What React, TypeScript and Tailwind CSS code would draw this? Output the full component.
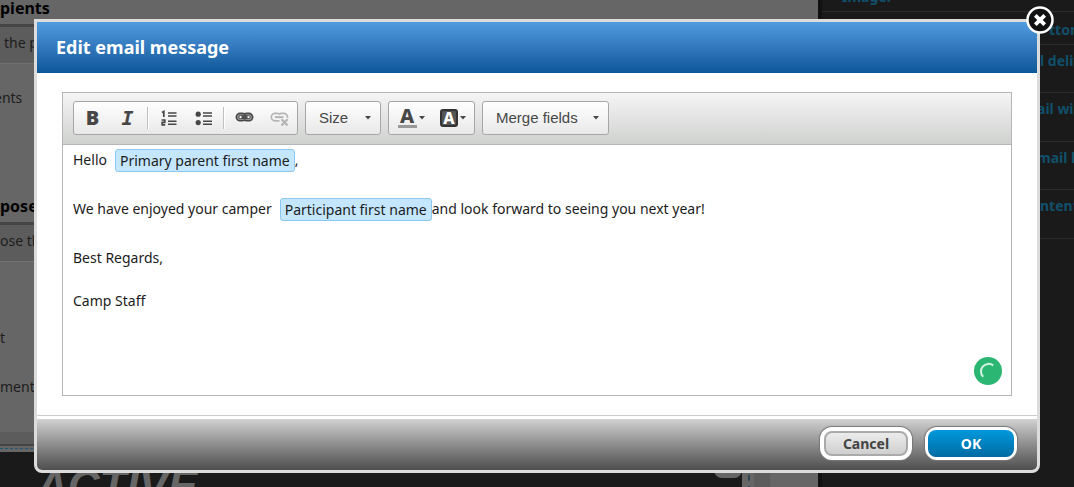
import { useState } from "react";
import type { ReactNode } from "react";
import { clsx } from "clsx";

const sidebarLinks = [
  { label: "tton", className: "h-[33px] pl-[227px] pt-2" },
  { label: "l deliv", className: "h-12 pl-[218px] pt-1.5" },
  { label: "ail wi", className: "h-[49px] pl-[215px] pt-1.5" },
  { label: "mail l", className: "h-12 pl-[215px] pt-1.5" },
  { label: "ntent", className: "h-[49px] pl-[218px] pt-1.5" },
];

export default function App() {
  const [open, setOpen] = useState(true);

  return (
    <div className="relative h-screen overflow-hidden bg-[#1a1a1a] font-['Noto_Sans',sans-serif] text-sm text-[#1c1c1c]">
      <BackgroundPage />
      {open && <EditMessageDialog onClose={() => setOpen(false)} />}
    </div>
  );
}

function BackgroundPage() {
  return (
    <div className="flex h-full whitespace-nowrap" aria-hidden="true">
      <div className="min-w-0 flex-1">
        <div className="bg-[#666]">
          <SectionTitle className="h-6 pb-1.5">pients</SectionTitle>
          <SectionHint className="pl-1">the people</SectionHint>
          <div className="h-[158px] pt-6 leading-5">
            <p className="-ml-1.5">ents</p>
            <SectionTitle className="h-[114px] pb-1.5">pose</SectionTitle>
          </div>
          <SectionHint>ose the</SectionHint>
          <div className="h-[170px] pt-[66px] leading-5">
            <p>t</p>
            <p className="mt-[29px]">ments</p>
          </div>
          <div className="h-3.5 border-b-2 border-[#444] bg-[#5c5c5c]" />
          <div className="h-1.5 pt-0.5">
            <div className="border-t border-dashed border-[#1d5878]" />
          </div>
        </div>
        <div className="flex h-10 bg-[#1a1a1a]">
          <div className="flex min-w-0 flex-1 justify-between overflow-hidden pl-9">
            <span className="pt-3.5 font-['Liberation_Sans',sans-serif] text-[44px] leading-10 font-bold text-[#666] italic">
              ACTIVE
            </span>
            <div className="h-[26px] w-7 rounded-b-lg bg-[#666]" />
          </div>
          <div className="flex w-[76px] bg-[#666]">
            <div className="ml-1.5 border-l-2 border-dashed border-[#2c4552]" />
            <div className="ml-1 w-4 bg-[#5c5c5c]" />
          </div>
        </div>
      </div>
      <nav className="w-64 shrink-0 overflow-hidden border-l-4 border-[#111] font-bold text-[#11506a]">
        <div className="flex h-3 items-end border-b border-[#2c2c2c] pb-1 pl-5 leading-5">
          <a href="#image">Image:</a>
        </div>
        {sidebarLinks.map((link) => (
          <div
            key={link.label}
            className={clsx("border-b border-[#2c2c2c] leading-5", link.className)}
          >
            <a href="#content">{link.label}</a>
          </div>
        ))}
      </nav>
    </div>
  );
}

function SectionTitle(props: { className?: string; children: ReactNode }) {
  return (
    <h2
      className={clsx(
        "flex items-end text-base leading-5 font-bold text-black",
        props.className,
      )}
    >
      {props.children}
    </h2>
  );
}

function SectionHint(props: { className?: string; children: ReactNode }) {
  return (
    <p
      className={clsx(
        "h-10 border-t-3 border-b border-t-[#444] border-b-[#707070] bg-[#5c5c5c] pt-1.5 leading-5",
        props.className,
      )}
    >
      {props.children}
    </p>
  );
}

function EditMessageDialog({ onClose }: { onClose: () => void }) {
  return (
    <div className="absolute inset-x-0 top-0 px-[34px] pt-[19px]">
      <div
        role="dialog"
        aria-labelledby="dialog-title"
        className="relative rounded-b-lg border-3 border-[#dcdcdc] bg-white"
      >
        <header className="h-[51px] bg-linear-to-b from-[#519bdf] to-[#0b5799] px-[19px]">
          <h1
            id="dialog-title"
            className="text-lg leading-[51px] font-bold text-white"
          >
            Edit email message
          </h1>
        </header>
        <div className="border-b border-[#ccc] px-[25px] py-[19px]">
          <Editor />
        </div>
        <footer className="mt-[3px] flex h-[51px] items-start justify-end gap-[13px] rounded-b-[5px] bg-linear-to-b from-[#d2d2d2] to-[#4f4f4f] px-5 pt-2">
          <button
            type="button"
            onClick={onClose}
            className="h-[33px] w-[92px] rounded-xl border-4 border-white bg-white shadow-[0_0_1px_1px_#777]"
          >
            <span className="block h-full rounded-lg border-2 border-[#aaa] bg-linear-to-b from-[#ececec] to-[#cfcfcf] text-sm leading-[21px] font-bold text-[#444]">
              Cancel
            </span>
          </button>
          <button
            type="button"
            onClick={onClose}
            className="h-[33px] w-[92px] rounded-xl border-3 border-white bg-white shadow-[0_0_1px_1px_#777]"
          >
            <span className="block h-full rounded-lg bg-linear-to-b from-[#0099dc] to-[#006ba3] text-sm leading-[27px] font-bold text-white">
              OK
            </span>
          </button>
        </footer>
        <button
          type="button"
          aria-label="Close"
          onClick={onClose}
          className="absolute -top-[17px] -right-[18px]"
        >
          <svg width="30" height="30" viewBox="0 0 30 30">
            <circle cx="15" cy="15" r="12.5" fill="#111" stroke="#fff" strokeWidth="2.5" />
            <path d="M10.3 10.3l9.4 9.4M19.7 10.3l-9.4 9.4" stroke="#fff" strokeWidth="3.8" />
          </svg>
        </button>
      </div>
    </div>
  );
}

function Editor() {
  return (
    <div className="relative border border-[#b6b6b6]">
      <div
        role="toolbar"
        aria-label="Formatting"
        className="flex h-[52px] items-start gap-[7px] border-b border-[#b6b6b6] bg-linear-to-b from-[#f5f5f5] to-[#cfd1cf] px-2.5 pt-2"
      >
        <ToolGroup>
          <ToolButton label="Bold">
            <span className="font-['Open_Sans',sans-serif] text-xl font-extrabold">B</span>
          </ToolButton>
          <ToolButton label="Italic">
            <span className="font-['DejaVu_Sans_Mono',monospace] text-xl font-bold italic">
              I
            </span>
          </ToolButton>
          <Separator />
          <ToolButton label="Numbered list">
            <svg width="16" height="16" viewBox="0 0 16 16" fill="none" stroke="#474747">
              <path d="M7 3h8.5M7 6h8.5M7 11.2h8.5M7 14.2h8.5" strokeWidth="1.6" />
              <path d="M1 2.5L2.8 1.5V7M.6 10h3.2v2.3H1.2V14.8h3" strokeWidth="1.7" />
            </svg>
          </ToolButton>
          <ToolButton label="Bulleted list">
            <svg width="18" height="16" viewBox="0 0 18 16" fill="#474747">
              <circle cx="3.2" cy="4.2" r="2.6" />
              <circle cx="3.2" cy="12.6" r="2.6" />
              <path d="M8 2.2h9v1.6H8zM8 5.2h9v1.6H8zM8 10.4h9V12H8zM8 13.4h9V15H8z" />
            </svg>
          </ToolButton>
          <Separator />
          <ToolButton label="Link">
            <LinkIcon color="#474747" />
          </ToolButton>
          <ToolButton label="Unlink" disabled>
            <LinkIcon color="#b5b5b5" broken />
          </ToolButton>
        </ToolGroup>
        <ToolSelect label="Size" className="w-[76px]" options={["Small", "Normal", "Large"]} />
        <ToolGroup>
          <ToolButton label="Text color" wide>
            <span className="h-5 w-[19px] border-b-3 border-[#999] text-xl leading-4 font-extrabold">
              A
            </span>
            <Caret />
          </ToolButton>
          <ToolButton label="Background color" wide>
            <span className="h-[18px] w-[18px] rounded-[3px] border-2 border-[#333] bg-[#555] text-base leading-[14px] font-extrabold text-white">
              A
            </span>
            <Caret />
          </ToolButton>
        </ToolGroup>
        <ToolSelect
          label="Merge fields"
          className="w-[127px]"
          options={["Primary parent first name", "Participant first name"]}
        />
      </div>
      <div
        contentEditable
        suppressContentEditableWarning
        role="textbox"
        aria-label="Message"
        className="h-[250px] space-y-[19px] px-2.5 pt-[3px] text-sm leading-6 outline-none"
      >
        <p className="flex h-[30px] items-start">
          Hello
          <MergeField>Primary parent first name</MergeField>,
        </p>
        <p className="flex h-[30px] items-start">
          We have enjoyed your camper
          <MergeField>Participant first name</MergeField>
          and look forward to seeing you next year!
        </p>
        <p>Best Regards,</p>
        <p>Camp Staff</p>
      </div>
      <svg
        className="absolute right-[9px] bottom-2.5"
        width="28"
        height="28"
        viewBox="0 0 28 28"
        fill="none"
      >
        <circle cx="14" cy="14" r="14" fill="#2bb673" />
        <path d="M19.2 8.4A7.6 7.6 0 0 0 9.2 19.8" stroke="#d5f3e3" strokeWidth="2" />
      </svg>
    </div>
  );
}

function MergeField({ children }: { children: ReactNode }) {
  return (
    <span
      contentEditable={false}
      className="mt-px ml-2 h-[23px] rounded-[3px] border border-[#8cc8f0] bg-[#c4e7ff] px-1 leading-[21px]"
    >
      {children}
    </span>
  );
}

function ToolGroup({ children }: { children: ReactNode }) {
  return (
    <div className="flex h-[34px] items-center rounded-[3px] border border-[#a6a6a6] bg-linear-to-b from-white to-[#e8e8e8] pl-px">
      {children}
    </div>
  );
}

function ToolButton(props: {
  label: string;
  wide?: boolean;
  disabled?: boolean;
  children: ReactNode;
}) {
  return (
    <button
      type="button"
      aria-label={props.label}
      disabled={props.disabled}
      className={clsx(
        "flex h-8 items-center justify-center text-[#474747]",
        props.wide ? "w-[42px] gap-0.5" : "w-[35px]",
      )}
    >
      {props.children}
    </button>
  );
}

function ToolSelect(props: { label: string; className: string; options: string[] }) {
  return (
    <div className={clsx("relative", props.className)}>
      <select
        aria-label={props.label}
        defaultValue=""
        className="h-[34px] w-full appearance-none rounded-[3px] border border-[#a6a6a6] bg-linear-to-b from-white to-[#e8e8e8] pl-[13px] font-['Liberation_Sans',sans-serif] text-[15px] text-[#474747]"
      >
        <option value="">{props.label}</option>
        {props.options.map((option) => (
          <option key={option}>{option}</option>
        ))}
      </select>
      <div className="pointer-events-none absolute inset-y-0 right-2.5 flex items-center">
        <Caret />
      </div>
    </div>
  );
}

function Separator() {
  return <div className="mx-0.5 h-[22px] w-0.5 border-r border-l border-l-[#c0c0c0] border-r-white" />;
}

function Caret() {
  return (
    <svg width="6" height="4" viewBox="0 0 6 4" fill="#474747">
      <path d="M0 0h6L3 3.5z" />
    </svg>
  );
}

function LinkIcon({ color, broken }: { color: string; broken?: boolean }) {
  return (
    <svg width="19" height="18" viewBox="0 0 19 18" fill="none" stroke={color}>
      {broken ? (
        <>
          <path
            d="M9.5 11.8H5a3.7 3.7 0 0 1 0-7.4h2.5a3.7 3.7 0 0 1 2 .6 3.7 3.7 0 0 1 2-.6H14a3.7 3.7 0 0 1 3.4 4.6"
            strokeWidth="1.7"
          />
          <path d="M5 8.1h8.5" strokeWidth="2" />
          <path d="M11.5 10.2l6 6.3M17.5 10.2l-6 6.3" strokeWidth="2.2" />
        </>
      ) : (
        <>
          <path
            d="M9.5 5a3.7 3.7 0 0 0-2-.6H5a3.7 3.7 0 0 0 0 7.4h2.5a3.7 3.7 0 0 0 2-.6 3.7 3.7 0 0 0 2 .6H14a3.7 3.7 0 0 0 0-7.4h-2.5a3.7 3.7 0 0 0-2 .6z"
            fill="#999"
            strokeWidth="1.6"
          />
          <rect x="3.8" y="6.6" width="11.4" height="3" rx="1.5" fill="#fff" strokeWidth="1" />
          <path d="M6.5 8.1h6" strokeWidth="2" />
        </>
      )}
    </svg>
  );
}
